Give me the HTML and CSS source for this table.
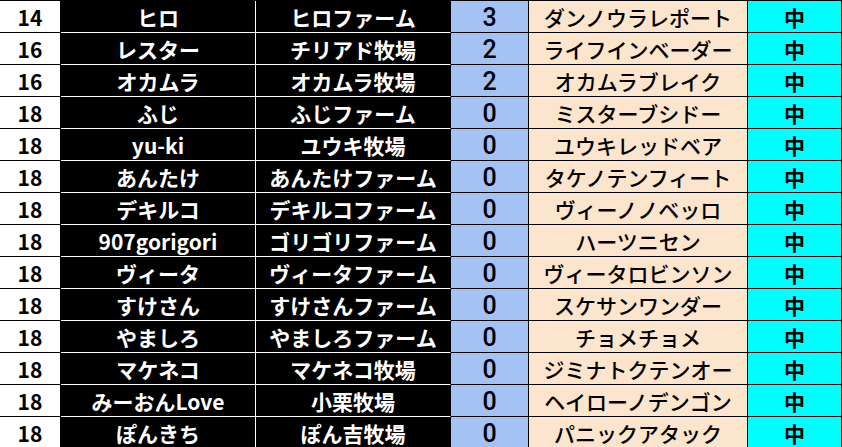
FILE: index.html
```html
<!DOCTYPE html>
<html lang="ja">
<head>
<meta charset="utf-8">
<link rel="stylesheet" href="styles.css">
</head>
<body>
<div class="sheet">
  <div class="c rank">14</div><div class="c name">ヒロ</div><div class="c farm">ヒロファーム</div><div class="c num">3</div><div class="c horse">ダンノウラレポート</div><div class="c lv">中</div>
  <div class="c rank">16</div><div class="c name">レスター</div><div class="c farm">チリアド牧場</div><div class="c num">2</div><div class="c horse">ライフインベーダー</div><div class="c lv">中</div>
  <div class="c rank">16</div><div class="c name">オカムラ</div><div class="c farm">オカムラ牧場</div><div class="c num">2</div><div class="c horse">オカムラブレイク</div><div class="c lv">中</div>
  <div class="c rank">18</div><div class="c name">ふじ</div><div class="c farm">ふじファーム</div><div class="c num">0</div><div class="c horse">ミスターブシドー</div><div class="c lv">中</div>
  <div class="c rank">18</div><div class="c name">yu-ki</div><div class="c farm">ユウキ牧場</div><div class="c num">0</div><div class="c horse">ユウキレッドベア</div><div class="c lv">中</div>
  <div class="c rank">18</div><div class="c name">あんたけ</div><div class="c farm">あんたけファーム</div><div class="c num">0</div><div class="c horse">タケノテンフィート</div><div class="c lv">中</div>
  <div class="c rank">18</div><div class="c name">デキルコ</div><div class="c farm">デキルコファーム</div><div class="c num">0</div><div class="c horse">ヴィーノノベッロ</div><div class="c lv">中</div>
  <div class="c rank">18</div><div class="c name">907gorigori</div><div class="c farm">ゴリゴリファーム</div><div class="c num">0</div><div class="c horse">ハーツニセン</div><div class="c lv">中</div>
  <div class="c rank">18</div><div class="c name">ヴィータ</div><div class="c farm">ヴィータファーム</div><div class="c num">0</div><div class="c horse">ヴィータロビンソン</div><div class="c lv">中</div>
  <div class="c rank">18</div><div class="c name">すけさん</div><div class="c farm">すけさんファーム</div><div class="c num">0</div><div class="c horse">スケサンワンダー</div><div class="c lv">中</div>
  <div class="c rank">18</div><div class="c name">やましろ</div><div class="c farm">やましろファーム</div><div class="c num">0</div><div class="c horse">チョメチョメ</div><div class="c lv">中</div>
  <div class="c rank">18</div><div class="c name">マケネコ</div><div class="c farm">マケネコ牧場</div><div class="c num">0</div><div class="c horse">ジミナトクテンオー</div><div class="c lv">中</div>
  <div class="c rank">18</div><div class="c name">みーおんLove</div><div class="c farm">小栗牧場</div><div class="c num">0</div><div class="c horse">ヘイローノデンゴン</div><div class="c lv">中</div>
  <div class="c rank">18</div><div class="c name">ぽんきち</div><div class="c farm">ぽん吉牧場</div><div class="c num">0</div><div class="c horse">パニックアタック</div><div class="c lv">中</div>
</div>
</body>
</html>
```
FILE: styles.css
```css
html, body {
  margin: 0;
  padding: 0;
  background: #ffffff;
  overflow: hidden;
}

.sheet {
  display: grid;
  grid-template-columns: 61px 195px 195px 78px 219px 94px;
  grid-auto-rows: 32px;
  border-top: 1px solid #000;
  width: 842px;
  font-family: "Noto Sans CJK JP", "Noto Sans", sans-serif;
  font-size: 21px;
  line-height: 31px;
}

.c {
  box-sizing: border-box;
  display: flex;
  align-items: center;
  justify-content: center;
  border-right: 1px solid #000;
  border-bottom: 1px solid #000;
  white-space: nowrap;
  padding-top: 2px;
  color: #000;
}

.rank {
  background: #ffffff;
  font-weight: 700;
}

.name, .farm {
  background: #000000;
  color: #ffffff;
  font-weight: 700;
  border-bottom-color: #ffffff;
}

.name {
  border-right-color: #ffffff;
}

.num {
  background: #a4c2f4;
  font-family: Roboto, "DejaVu Sans", sans-serif;
  font-size: 25px;
  font-weight: 500;
  padding-top: 1px;
}

.horse {
  background: #fce5cd;
  font-weight: 500;
}

.lv {
  background: #00ffff;
  font-weight: 700;
}
```
